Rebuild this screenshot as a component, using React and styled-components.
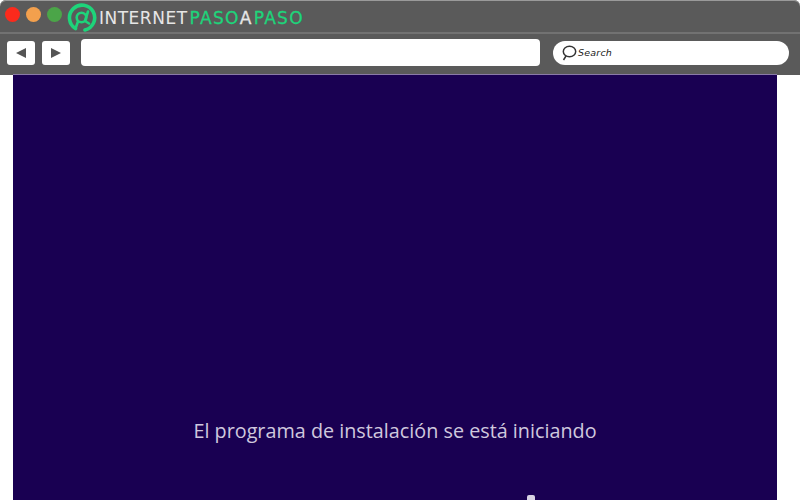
import React from 'react';
import styled, {createGlobalStyle} from 'styled-components';

const GlobalStyle = createGlobalStyle`
  html, body {
    margin: 0;
    padding: 0;
    background: #fff;
  }
`;

const Page = styled.div`
  width: 800px;
  height: 500px;
  overflow: hidden;
  display: flex;
  flex-direction: column;
  background: #fff;
  font-family: "Liberation Sans", Arial, sans-serif;
`;

const Chrome = styled.header`
  height: 75px;
  flex: none;
  background: #5a5a5a;
  border-radius: 6px 6px 0 0;
  box-shadow: inset 0 1px 0 #9a9a9a;
  display: flex;
  flex-direction: column;
`;

const TitleBar = styled.div`
  height: 32px;
  flex: none;
  display: flex;
  align-items: center;
  padding: 0 0 0 5px;
  border-bottom: 2px solid #727272;
`;

const Dots = styled.div`
  display: flex;
  gap: 6px;
  margin-top: -3px;
`;

const Dot = styled.span`
  width: 15px;
  height: 15px;
  border-radius: 50%;
  background: ${(p) => p.$color};
`;

const Brand = styled.div`
  display: flex;
  align-items: center;
  margin-left: 5px;
  margin-top: 3px;
`;

const BrandText = styled.div`
  margin-left: 2px;
  font-family: "DejaVu Sans", sans-serif;
  font-size: 17px;
  letter-spacing: 0.5px;
  white-space: nowrap;
  color: #e6e6e6;
`;

const BrandAccent = styled.span`
  margin-left: ${(p) => p.$gap || 0}px;
  letter-spacing: 1.3px;
  -webkit-text-stroke: 0.3px #1ed47a;
  color: #1ed47a;
`;

const BrandJoin = styled.span`
  letter-spacing: 2.4px;
  -webkit-text-stroke: 0.3px #e6e6e6;
`;

const ToolBar = styled.div`
  flex: 1;
  display: flex;
  align-items: center;
  padding: 0 11px 4px 7px;
`;

const NavButton = styled.button`
  width: 28px;
  height: 24px;
  margin-right: 7px;
  padding: 0;
  border: none;
  border-radius: 3px;
  background: #fff;
  color: #555;
  display: flex;
  align-items: center;
  justify-content: center;
`;

const AddressBar = styled.div`
  width: 459px;
  height: 27px;
  margin-left: 4px;
  background: #fff;
  border-radius: 4px;
`;

const SearchBar = styled.div`
  flex: 1;
  height: 24px;
  margin-left: 13px;
  padding-left: 9px;
  background: #fff;
  border-radius: 12px;
  display: flex;
  align-items: center;
  gap: 0;
`;

const SearchLabel = styled.span`
  font-family: "DejaVu Sans", sans-serif;
  font-style: italic;
  font-size: 9.5px;
  letter-spacing: 0.2px;
  color: #222;
`;

const Content = styled.main`
  flex: 1;
  min-height: 0;
  padding: 0 23px 0 13px;
  display: flex;
`;

const Screen = styled.div`
  flex: 1;
  position: relative;
  background: #190052;
  box-shadow: 0 -1px 0 #8a7aa8;
  display: flex;
  flex-direction: column;
  align-items: center;
  padding-top: 344px;
`;

const Message = styled.div`
  font-family: "Open Sans", "Noto Sans", sans-serif;
  font-size: 19.8px;
  line-height: 24px;
  color: #cfc8de;
  white-space: nowrap;
`;

const Spinner = styled.span`
  position: absolute;
  left: 514px;
  bottom: 0;
  width: 8px;
  height: 5px;
  border-radius: 2px 2px 0 0;
  background: #d8d2e4;
`;

const Triangle = ({flip}) => (
  <svg width="12" height="12" viewBox="0 0 12 12">
    <path d={flip ? 'M1 1 L11 6 L1 11 Z' : 'M11 1 L1 6 L11 11 Z'} fill="#555" />
  </svg>
);

const Logo = () => (
  <svg width="30" height="30" viewBox="0 0 30 30" fill="none" stroke="#1ed47a" strokeLinecap="round">
    <path d="M8.5 25.5 A12.6 12.6 0 1 1 18 27" strokeWidth="3.6" />
    <circle cx="14.5" cy="14.5" r="4.8" strokeWidth="2.6" />
    <path d="M21 8.5 L18 18 L22 20.5 M11 18.5 L8.5 25.5" strokeWidth="2.6" />
  </svg>
);

const SearchIcon = () => (
  <svg width="16" height="16" viewBox="0 0 16 16" fill="none" stroke="#333" strokeWidth="1.5">
    <ellipse cx="7.5" cy="6.5" rx="6.2" ry="5.3" />
    <path d="M4 11 L1.5 15" />
  </svg>
);

const App = () => {
  return (
    <Page>
      <GlobalStyle />
      <Chrome>
        <TitleBar>
          <Dots>
            <Dot $color="#fc2a1c" />
            <Dot $color="#f3a04d" />
            <Dot $color="#4ba548" />
          </Dots>
          <Brand>
            <Logo />
            <BrandText>
              INTERNET<BrandAccent $gap={2}>PASO</BrandAccent><BrandJoin>A</BrandJoin><BrandAccent>PASO</BrandAccent>
            </BrandText>
          </Brand>
        </TitleBar>
        <ToolBar>
          <NavButton><Triangle /></NavButton>
          <NavButton><Triangle flip /></NavButton>
          <AddressBar />
          <SearchBar>
            <SearchIcon />
            <SearchLabel>Search</SearchLabel>
          </SearchBar>
        </ToolBar>
      </Chrome>
      <Content>
        <Screen>
          <Message>El programa de instalación se está iniciando</Message>
          <Spinner />
        </Screen>
      </Content>
    </Page>
  );
};

export default App;
